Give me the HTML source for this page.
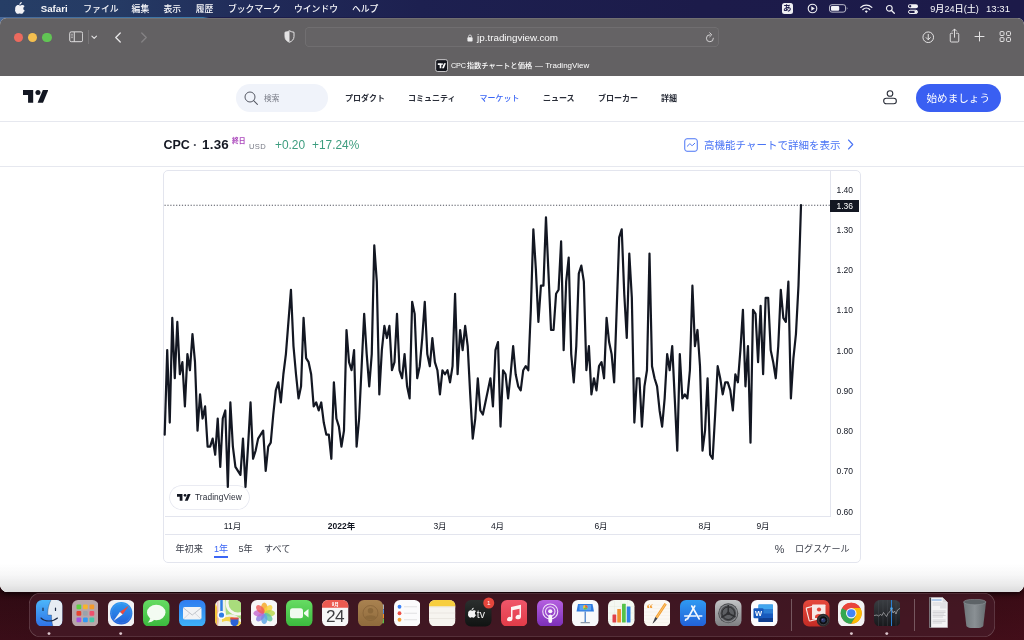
<!DOCTYPE html>
<html lang="ja">
<head>
<meta charset="utf-8">
<title>CPC指数チャートと価格 — TradingView</title>
<style>
html,body{margin:0;padding:0;}
body{width:1024px;height:640px;overflow:hidden;position:relative;background:#2a0a12;
 font-family:"Liberation Sans","Noto Sans CJK JP",sans-serif;color:#131722;}
.abs{position:absolute;white-space:nowrap;line-height:1;}
#menubar,#win,#dock{will-change:transform;}
/* desktop */
#desk{position:absolute;left:0;top:0;width:1024px;height:640px;
 background:linear-gradient(180deg,#4a6a9a 0px,#4a6a9a 40px,#2a0a12 60px,#2a0a12 100%);}
#deskdark{position:absolute;left:0;top:0;width:1024px;height:60px;
 background:linear-gradient(90deg,rgba(58,124,174,0) 0px,rgba(58,124,174,0.9) 195px,rgba(58,124,174,1) 203px,#1c1d4c 209px,#1c1b4a 1024px);}
#deskbot{position:absolute;left:0;top:585px;width:1024px;height:55px;
 background:linear-gradient(90deg,rgba(70,14,26,0.25) 0%,rgba(0,0,0,0) 25%,rgba(0,0,0,0) 70%,rgba(90,16,30,0.35) 100%),linear-gradient(180deg,#1f060b 0px,#1f060b 8px,#2b0a12 16px,#360d17 55px);}
/* menubar */
#menubar{position:absolute;left:0;top:0;width:1024px;height:17px;
 background:linear-gradient(90deg,#263e66 0px,#253a64 120px,#202a58 260px,#1d2050 420px,#1c1b4a 700px,#1c1a49 1024px);color:#fff;}
#menubar .mi{position:absolute;top:2.500px;font-size:8.800px;line-height:12px;white-space:nowrap;color:#f7f7fa;font-weight:500;}
/* safari window */
#win{position:absolute;left:0;top:18px;width:1024px;height:573.800px;border-radius:6.500px 6.500px 7.500px 7.500px;overflow:hidden;background:#fff;box-shadow:0 3px 4px -1px rgba(10,0,4,0.7);}
#toolbar{position:absolute;left:0;top:0;width:1024px;height:57.5px;background:#636163;box-shadow:inset 0 0.8px 0 rgba(255,255,255,0.13);}
#urlfield{position:absolute;left:305px;top:9.300px;width:413.500px;height:19.500px;border-radius:4.500px;background:#656365;box-shadow:inset 0 0 0 0.8px rgba(255,255,255,0.10);}
.tl{position:absolute;top:14.5px;width:9.4px;height:9.4px;border-radius:50%;}
/* page */
#page{position:absolute;left:0;top:57.5px;width:1024px;height:517px;background:#fff;}
.hline{position:absolute;left:0;width:1024px;height:1px;background:#e6e8ef;}
.nav{position:absolute;top:17px;font-size:8px;line-height:12px;font-weight:700;color:#2a2e39;white-space:nowrap;}
#chartbox{position:absolute;left:163px;top:94.500px;width:696px;height:391px;border:1px solid #e3e5ee;border-radius:5px;background:#fff;box-sizing:content-box;}
.pl{position:absolute;left:836.500px;font-size:8.500px;line-height:10px;color:#131722;white-space:nowrap;}
.tl2{position:absolute;top:445px;font-size:8.500px;line-height:10px;color:#131722;white-space:nowrap;transform:translateX(-50%);}
.rng{position:absolute;top:467.200px;font-size:9.100px;line-height:12px;color:#40444f;white-space:nowrap;}
/* dock */
#dock{position:absolute;left:29px;top:593px;width:966px;height:43.500px;border-radius:11px;background:rgba(70,28,40,0.72);box-shadow:inset 0 0 0 0.6px rgba(255,255,255,0.22);}
.ic{position:absolute;top:6.5px;width:26.5px;height:26.5px;border-radius:6px;overflow:hidden;}
.dot{position:absolute;top:39.500px;width:2.600px;height:2.600px;border-radius:50%;background:#d9c9cd;}
</style>
</head>
<body>
<div id="desk"></div><div id="deskdark"></div><div id="deskbot"></div>

<!-- MENUBAR -->
<div id="menubar">
 <svg class="abs" style="left:15.400px;top:1.700px" width="10.200" height="12" viewBox="0 0 170 200"><path fill="#f2f2f6" d="M150.4 155.6c-2.9 6.7-6.300 12.900-10.300 18.600-5.400 7.700-9.800 13.100-13.300 16-5.300 4.900-10.900 7.400-17 7.500-4.300 0-9.600-1.200-15.700-3.800-6.100-2.500-11.700-3.700-16.900-3.700-5.400 0-11.200 1.200-17.400 3.700-6.200 2.500-11.200 3.800-15 4-5.800.2-11.600-2.300-17.300-7.700-3.700-3.200-8.300-8.800-13.900-16.700-6-8.400-10.900-18.100-14.700-29.200C4.800 132.300 2.700 120.700 2.700 109.500c0-12.900 2.800-24 8.400-33.300 4.400-7.500 10.200-13.400 17.500-17.700 7.300-4.300 15.200-6.500 23.600-6.700 4.600 0 10.700 1.400 18.300 4.300 7.600 2.800 12.400 4.300 14.600 4.300 1.600 0 7-1.700 16.200-5.100 8.700-3.100 16-4.400 22-3.900 16.300 1.300 28.500 7.700 36.600 19.300-14.500 8.800-21.700 21.100-21.600 36.900.1 12.300 4.600 22.500 13.300 30.600 4 3.800 8.400 6.700 13.400 8.800-1.100 3.100-2.200 6.100-3.400 8.900zM113.100 4c0 9.700-3.500 18.700-10.600 27.100-8.500 9.900-18.800 15.700-29.900 14.800-.1-1.200-.2-2.400-.2-3.700 0-9.300 4-19.200 11.200-27.300 3.600-4.100 8.100-7.500 13.700-10.200C102.800 2 108.100.5 113 .3c.1 1.300.1 2.500.1 3.700z"/></svg>
 <span class="mi" style="left:40.700px;font-weight:700;font-size:9.700px;">Safari</span>
 <span class="mi" style="left:83.300px;">ファイル</span>
 <span class="mi" style="left:131.600px;">編集</span>
 <span class="mi" style="left:163.500px;">表示</span>
 <span class="mi" style="left:195.700px;">履歴</span>
 <span class="mi" style="left:228px;">ブックマーク</span>
 <span class="mi" style="left:294px;">ウインドウ</span>
 <span class="mi" style="left:352px;">ヘルプ</span>
 <!-- right status -->
 <div class="abs" style="left:781.5px;top:2.5px;width:11.5px;height:11.5px;border-radius:2.5px;background:#eeeef3;color:#1c1b4a;font-size:8.5px;line-height:11.5px;text-align:center;font-weight:700;">あ</div>
 <svg class="abs" style="left:806.5px;top:3px" width="11" height="11" viewBox="0 0 22 22"><circle cx="11" cy="11" r="8.6" fill="none" stroke="#f2f2f6" stroke-width="2.2"/><path d="M8.600 6.600 L15.600 11 L8.600 15.400Z" fill="#f2f2f6"/></svg>
 <svg class="abs" style="left:829px;top:4.200px" width="19.500" height="8.800" viewBox="0 0 40 20" preserveAspectRatio="none"><rect x="1" y="1.500" width="33" height="17" rx="5" fill="none" stroke="#c9c9d6" stroke-width="2"/><rect x="4" y="4.500" width="17" height="11" rx="2.500" fill="#f4f4f8"/><path d="M36.500 7 q3 3 0 6z" fill="#c9c9d6"/></svg>
 <svg class="abs" style="left:860.200px;top:3.600px" width="12.600" height="9.100" viewBox="0 0 32 23"><path d="M2 8.500 A20 20 0 0 1 30 8.500" fill="none" stroke="#f2f2f6" stroke-width="3.400" stroke-linecap="round"/><path d="M7.300 13.800 A12.500 12.500 0 0 1 24.700 13.800" fill="none" stroke="#f2f2f6" stroke-width="3.400" stroke-linecap="round"/><path d="M12.200 18.600 A5.400 5.400 0 0 1 19.800 18.600 L16 22.500Z" fill="#f2f2f6"/></svg>
 <svg class="abs" style="left:885px;top:3.500px" width="10.400" height="10.400" viewBox="0 0 24 24"><circle cx="10" cy="10" r="6.600" fill="none" stroke="#f2f2f6" stroke-width="2.600"/><path d="M15 15 L21.500 21.500" stroke="#f2f2f6" stroke-width="3" stroke-linecap="round"/></svg>
 <svg class="abs" style="left:907px;top:3px" width="12" height="12" viewBox="0 0 24 24"><rect x="2" y="2.500" width="20" height="8" rx="4" fill="#f2f2f6"/><circle cx="6.300" cy="6.500" r="2.300" fill="#1c1b4a"/><rect x="3" y="14.500" width="18" height="6.500" rx="3.250" fill="none" stroke="#f2f2f6" stroke-width="2"/><circle cx="17.500" cy="17.750" r="2.700" fill="#f2f2f6"/></svg>
 <span class="mi" style="left:930.300px;font-size:9.100px;">9月24日(土)</span>
 <span class="mi" style="left:986px;font-size:9.600px;">13:31</span>
</div>

<!-- SAFARI WINDOW -->
<div id="win">
 <div id="toolbar">
  <div class="tl" style="left:13.800px;background:#ec6a5e;"></div>
  <div class="tl" style="left:27.900px;background:#f4bf4f;"></div>
  <div class="tl" style="left:42.300px;background:#61c554;"></div>
  <!-- sidebar icon -->
  <svg class="abs" style="left:68.700px;top:13px" width="14.400" height="11.800" viewBox="0 0 30 24"><rect x="1.500" y="1.500" width="27" height="20.500" rx="3.200" fill="none" stroke="#e4e3e4" stroke-width="2"/><path d="M11 2 V22" stroke="#e4e3e4" stroke-width="2"/><path d="M4.500 6.500h3.500M4.500 10h3.500M4.500 13.500h3.500" stroke="#e4e3e4" stroke-width="1.400"/></svg>
  <div class="abs" style="left:87.500px;top:12px;width:0.6px;height:14px;background:#777577;"></div>
  <svg class="abs" style="left:91.300px;top:17.200px" width="6.400" height="4.600" viewBox="0 0 14 10"><path d="M2 2.500 L7 7.500 L12 2.500" fill="none" stroke="#e4e3e4" stroke-width="2.400" stroke-linecap="round" stroke-linejoin="round"/></svg>
  <svg class="abs" style="left:113.800px;top:13.500px" width="8" height="11" viewBox="0 0 16 22"><path d="M12.500 2 L3.500 11 L12.500 20" fill="none" stroke="#e9e8e9" stroke-width="2.600" stroke-linecap="round" stroke-linejoin="round"/></svg>
  <svg class="abs" style="left:139.500px;top:13.500px" width="8" height="11" viewBox="0 0 16 22"><path d="M3.500 2 L12.500 11 L3.500 20" fill="none" stroke="#858385" stroke-width="2.600" stroke-linecap="round" stroke-linejoin="round"/></svg>
  <!-- shield -->
  <svg class="abs" style="left:283.500px;top:12px" width="11" height="13" viewBox="0 0 22 26"><path d="M11 1.500 C8 3.500 5 4.300 2 4.500 V13 C2 19 6 22.500 11 24.500 C16 22.500 20 19 20 13 V4.500 C17 4.300 14 3.500 11 1.500Z" fill="none" stroke="#e4e3e4" stroke-width="2"/><path d="M11 1.500 C8 3.500 5 4.300 2 4.500 V13 C2 19 6 22.500 11 24.500Z" fill="#e4e3e4"/></svg>
  <div id="urlfield"></div>
  <!-- lock -->
  <svg class="abs" style="left:467px;top:15.600px" width="6" height="8" viewBox="0 0 14 18"><rect x="1" y="7.500" width="12" height="9.500" rx="1.800" fill="#ededee"/><path d="M3.700 8 V5.300 a3.300 3.300 0 0 1 6.600 0 V8" fill="none" stroke="#ededee" stroke-width="1.800"/></svg>
  <span class="abs" style="left:477px;top:13.500px;font-size:9.850px;line-height:12px;color:#fafafa;">jp.tradingview.com</span>
  <!-- reload -->
  <svg class="abs" style="left:705px;top:13.500px" width="10" height="11" viewBox="0 0 20 22"><path d="M16.800 12.500 A7 7 0 1 1 10 5.500" fill="none" stroke="#dcdbdc" stroke-width="1.800" stroke-linecap="round"/><path d="M9.500 1.500 L13.500 5.500 L9.500 9.500" fill="none" stroke="#dcdbdc" stroke-width="1.800" stroke-linecap="round" stroke-linejoin="round"/></svg>
  <!-- right icons -->
  <svg class="abs" style="left:921.800px;top:12.600px" width="12.500" height="12.500" viewBox="0 0 24 24"><circle cx="12" cy="12" r="10.200" fill="none" stroke="#e4e3e4" stroke-width="1.900"/><path d="M12 6.500 V16.500 M8 12.800 L12 16.800 L16 12.800" fill="none" stroke="#e4e3e4" stroke-width="1.900" stroke-linecap="round" stroke-linejoin="round"/></svg>
  <svg class="abs" style="left:948.500px;top:9.800px" width="11" height="15" viewBox="0 0 22 30"><path d="M7 10.500 H4.500 a2 2 0 0 0 -2 2 V26 a2 2 0 0 0 2 2 H17.500 a2 2 0 0 0 2 -2 V12.500 a2 2 0 0 0 -2 -2 H15" fill="none" stroke="#e4e3e4" stroke-width="1.900" stroke-linecap="round"/><path d="M11 18.500 V2.500 M6.800 6.300 L11 2 L15.200 6.300" fill="none" stroke="#e4e3e4" stroke-width="1.900" stroke-linecap="round" stroke-linejoin="round"/></svg>
  <svg class="abs" style="left:973.900px;top:13.100px" width="11" height="11" viewBox="0 0 22 22"><path d="M11 2 V20 M2 11 H20" stroke="#e4e3e4" stroke-width="2" stroke-linecap="round"/></svg>
  <svg class="abs" style="left:999px;top:13px" width="13" height="12" viewBox="0 0 13 12"><g fill="none" stroke="#e4e3e4" stroke-width="1"><rect x="1.100" y="0.600" width="3.900" height="3.900" rx="0.900"/><rect x="7.600" y="0.600" width="3.900" height="3.900" rx="0.900"/><rect x="1.100" y="6.600" width="3.900" height="3.900" rx="0.900"/><rect x="7.600" y="6.600" width="3.900" height="3.900" rx="0.900"/></g></svg>
  <!-- tab title -->
  <svg class="abs" style="left:434.800px;top:41.200px" width="13.200" height="13.200" viewBox="0 0 26 26"><rect x="1.300" y="1.300" width="23.400" height="23.400" rx="4" fill="#14161d" stroke="#e9e8e9" stroke-width="1.600"/><path d="M5.500 8.500 H12.500 V18 H9.200 V11.800 H5.500Z M13.800 8.500 a1.700 1.700 0 1 0 .01 0Z M17.800 8.500 H21.500 L17.500 18 H13.800Z" fill="#fff"/></svg>
  <span class="abs" style="left:451px;top:42.800px;font-size:7.300px;line-height:10px;color:#ffffff;font-weight:500;"><span style="font-size:7.300px;letter-spacing:-0.25px;">CPC</span><span style="margin-left:1px;">指数チャートと価格</span><span style="font-size:8px;margin-left:0.500px;"> — TradingView</span></span>
 </div>

 <!-- PAGE -->
 <div id="page">
  <!-- TV logo -->
  <svg class="abs" style="left:23px;top:14.800px" width="25.300" height="12.700" viewBox="0 0 36 18"><path d="M0 0 H14.500 V18 H7.200 V7.200 H0Z" fill="#131722"/><circle cx="21.300" cy="3.600" r="3.600" fill="#131722"/><path d="M28.300 0 H36 L28.500 18 H20.800Z" fill="#131722"/></svg>
  <!-- search -->
  <div class="abs" style="left:235.500px;top:8.700px;width:92px;height:28px;border-radius:14px;background:#f0f3fa;"></div>
  <svg class="abs" style="left:243.900px;top:15.800px" width="15" height="15" viewBox="0 0 30 30"><circle cx="12" cy="12" r="10" fill="none" stroke="#555863" stroke-width="2"/><path d="M19.300 19.300 L26.800 26.600" stroke="#555863" stroke-width="2.200" stroke-linecap="round"/></svg>
  <span class="abs" style="left:264px;top:18px;font-size:7.700px;line-height:10px;color:#787b86;">検索</span>
  <span class="nav" style="left:345px;">プロダクト</span>
  <span class="nav" style="left:408px;">コミュニティ</span>
  <span class="nav" style="left:479.500px;color:#3b66f5;font-weight:500;">マーケット</span>
  <span class="nav" style="left:543px;">ニュース</span>
  <span class="nav" style="left:598px;">ブローカー</span>
  <span class="nav" style="left:661px;">詳細</span>
  <!-- user -->
  <svg class="abs" style="left:881.800px;top:13.600px" width="16" height="16" viewBox="0 0 32 32"><circle cx="16" cy="9" r="5.600" fill="none" stroke="#2a2e39" stroke-width="2.200"/><rect x="3.300" y="18.600" width="25.400" height="11" rx="5.500" fill="none" stroke="#2a2e39" stroke-width="2.200"/></svg>
  <div class="abs" style="left:915.500px;top:8.700px;width:85.500px;height:28px;border-radius:14px;background:#3a5ff2;color:#fff;font-size:10.600px;line-height:28px;text-align:center;">始めましょう</div>
  <div class="hline" style="top:45.500px;"></div>

  <!-- title row -->
  <span class="abs" style="left:163.500px;top:62.500px;font-size:12.500px;line-height:14px;font-weight:700;color:#131722;">CPC</span>
  <span class="abs" style="left:193px;top:62.500px;font-size:13px;line-height:14px;font-weight:700;color:#50535e;">·</span>
  <span class="abs" style="left:202px;top:62.500px;font-size:13.400px;line-height:14px;font-weight:700;color:#131722;letter-spacing:0.25px;">1.36</span>
  <span class="abs" style="left:232px;top:61.300px;font-size:6.800px;line-height:8px;font-weight:700;color:#ab47bc;">終日</span>
  <span class="abs" style="left:249px;top:67px;font-size:7.600px;line-height:8px;color:#787b86;letter-spacing:0.3px;">USD</span>
  <span class="abs" style="left:275px;top:63.500px;font-size:11.900px;line-height:13px;color:#3d9d7f;">+0.20</span>
  <span class="abs" style="left:312px;top:63.500px;font-size:11.900px;line-height:13px;color:#3d9d7f;">+17.24%</span>
  <svg class="abs" style="left:684px;top:62px" width="14" height="14" viewBox="0 0 28 28"><rect x="1.500" y="1.500" width="25" height="25" rx="4.500" fill="none" stroke="#4a74f5" stroke-width="2"/><path d="M6.500 16.500 L10.500 12.500 C12 11 13 12 14 13.500 C15 15 16 16 17.500 14.500 L21.500 10.500" fill="none" stroke="#4a74f5" stroke-width="2" stroke-linecap="round"/></svg>
  <span class="abs" style="left:704px;top:62.500px;font-size:10.500px;line-height:14px;color:#4a74f5;">高機能チャートで詳細を表示</span>
  <svg class="abs" style="left:846.500px;top:63.500px" width="7" height="11" viewBox="0 0 14 22"><path d="M3 2 L11.500 11 L3 20" fill="none" stroke="#4a74f5" stroke-width="2.200" stroke-linecap="round" stroke-linejoin="round"/></svg>
  <div class="hline" style="top:90.500px;"></div>

  <!-- chart box -->
  <div id="chartbox"></div>
  <div class="abs" style="left:829.700px;top:95.500px;width:1px;height:345px;background:#e3e5ee;"></div>
  <div class="abs" style="left:164.500px;top:440px;width:666px;height:1px;background:#e3e5ee;"></div>
  <div class="abs" style="left:164.500px;top:458.500px;width:695.500px;height:1px;background:#e3e5ee;"></div>

  <div class="abs" style="left:169.500px;top:410.500px;width:79px;height:23px;border-radius:12px;background:#fff;box-shadow:0 0 0 0.7px #e3e5ee;"></div>
  <!-- CHART SVG (page coords: svg covers full page area) -->
  <svg id="chart" class="abs" style="left:0;top:0.500px" width="1024" height="515" viewBox="0 76 1024 515">
   <!--CHARTLINE-->
   <line x1="164.500" y1="205.250" x2="830" y2="205.250" stroke="#50535e" stroke-width="1" stroke-dasharray="1.200 1.700"/>
   <path d="M164.70 434.62 L167.22 350.10 L169.75 422.55 L172.27 317.90 L174.80 378.27 L177.32 321.93 L179.85 374.25 L182.38 362.18 L184.90 406.45 L187.42 354.12 L189.95 370.23 L192.47 334.00 L195.00 362.18 L197.52 430.60 L200.05 394.38 L202.57 418.53 L205.10 406.45 L207.62 446.70 L210.15 446.70 L212.67 438.65 L215.20 454.75 L217.72 418.53 L220.25 466.83 L222.77 418.53 L225.30 410.48 L227.82 486.95 L230.35 402.43 L232.88 446.70 L235.40 466.83 L237.92 470.85 L240.45 474.88 L242.97 438.65 L245.50 486.95 L248.02 446.70 L250.55 402.43 L253.07 458.78 L255.60 450.73 L258.12 438.65 L260.65 434.62 L263.17 430.60 L265.70 470.85 L268.22 446.70 L270.75 442.68 L273.27 414.50 L275.80 390.35 L278.32 382.30 L280.85 402.43 L283.38 374.25 L285.90 354.12 L288.42 321.93 L290.95 289.73 L293.48 346.08 L296.00 374.25 L298.52 398.40 L301.05 386.33 L303.57 317.90 L306.10 358.15 L308.62 362.18 L311.15 374.25 L313.67 406.45 L316.20 402.43 L318.73 410.48 L321.25 402.43 L323.77 422.55 L326.30 434.62 L328.82 434.62 L331.35 458.78 L333.88 382.30 L336.40 418.53 L338.92 426.58 L341.45 446.70 L343.98 430.60 L346.50 329.98 L349.02 362.18 L351.55 370.23 L354.07 350.10 L356.60 446.70 L359.12 418.53 L361.65 366.20 L364.17 313.88 L366.70 354.12 L369.23 386.33 L371.75 354.12 L374.27 245.45 L376.80 281.68 L379.32 394.38 L381.85 350.10 L384.38 325.95 L386.90 338.02 L389.42 325.95 L391.95 370.23 L394.48 362.18 L397.00 313.88 L399.52 370.23 L402.05 378.27 L404.57 354.12 L407.10 386.33 L409.62 398.40 L412.15 301.80 L414.67 313.88 L417.20 378.27 L419.72 366.20 L422.25 338.02 L424.77 301.80 L427.30 354.12 L429.82 366.20 L432.35 338.02 L434.88 362.18 L437.40 370.23 L439.92 394.38 L442.45 370.23 L444.97 374.25 L447.50 370.23 L450.02 382.30 L452.55 366.20 L455.07 293.75 L457.60 374.25 L460.12 329.98 L462.65 350.10 L465.17 325.95 L467.70 346.08 L470.22 394.38 L472.75 438.65 L475.27 418.53 L477.80 378.27 L480.32 410.48 L482.85 414.50 L485.38 402.43 L487.90 390.35 L490.42 378.27 L492.95 406.45 L495.47 350.10 L498.00 342.05 L500.52 426.58 L503.05 370.23 L505.57 374.25 L508.10 398.40 L510.62 374.25 L513.15 346.08 L515.67 374.25 L518.20 386.33 L520.72 390.35 L523.25 370.23 L525.77 366.20 L528.30 370.23 L530.83 309.85 L533.35 229.35 L535.88 269.60 L538.40 321.93 L540.92 285.70 L543.45 285.70 L545.97 217.28 L548.50 273.63 L551.02 329.98 L553.55 329.98 L556.08 293.75 L558.60 289.73 L561.12 241.43 L563.65 350.10 L566.17 281.68 L568.70 257.53 L571.22 354.12 L573.75 382.30 L576.27 346.08 L578.80 273.63 L581.33 265.58 L583.85 281.68 L586.38 370.23 L588.90 346.08 L591.42 394.38 L593.95 378.27 L596.47 390.35 L599.00 366.20 L601.52 362.18 L604.05 378.27 L606.58 317.90 L609.10 342.05 L611.62 354.12 L614.15 382.30 L616.67 309.85 L619.20 237.40 L621.72 229.35 L624.25 293.75 L626.77 338.02 L629.30 253.50 L631.83 297.78 L634.35 422.55 L636.88 378.27 L639.40 378.27 L641.92 426.58 L644.45 386.33 L646.97 370.23 L649.50 253.50 L652.02 366.20 L654.55 378.27 L657.08 386.33 L659.60 410.48 L662.12 426.58 L664.65 398.40 L667.17 354.12 L669.70 370.23 L672.22 346.08 L674.75 398.40 L677.27 450.73 L679.80 354.12 L682.33 398.40 L684.85 394.38 L687.38 398.40 L689.90 370.23 L692.42 285.70 L694.95 346.08 L697.47 329.98 L700.00 366.20 L702.52 450.73 L705.05 430.60 L707.58 378.27 L710.10 454.75 L712.62 458.78 L715.15 414.50 L717.67 366.20 L720.20 378.27 L722.72 394.38 L725.25 382.30 L727.77 382.30 L730.30 390.35 L732.83 410.48 L735.35 374.25 L737.88 382.30 L740.40 350.10 L742.92 309.85 L745.45 386.33 L747.97 346.08 L750.50 442.68 L753.02 309.85 L755.55 313.88 L758.08 362.18 L760.60 305.82 L763.12 374.25 L765.65 297.78 L768.17 297.78 L770.70 350.10 L773.22 362.18 L775.75 378.27 L778.27 346.08 L780.80 289.73 L783.33 317.90 L785.85 321.93 L788.38 281.68 L790.90 398.40 L793.42 358.15 L795.95 334.00 L798.47 285.70 L801.00 205.20" fill="none" stroke="#131722" stroke-width="2.2" stroke-linejoin="round" stroke-linecap="round"/>
   <!--/CHARTLINE-->
  </svg>

  <!-- price labels -->
  <span class="pl" style="top:109px;">1.40</span>
  <div class="abs" style="left:829.800px;top:124px;width:29.400px;height:12.500px;background:#131722;"></div>
  <span class="pl" style="top:125.500px;color:#fff;">1.36</span>
  <span class="pl" style="top:149.300px;">1.30</span>
  <span class="pl" style="top:189.500px;">1.20</span>
  <span class="pl" style="top:229.800px;">1.10</span>
  <span class="pl" style="top:270px;">1.00</span>
  <span class="pl" style="top:310.300px;">0.90</span>
  <span class="pl" style="top:350.500px;">0.80</span>
  <span class="pl" style="top:390.800px;">0.70</span>
  <span class="pl" style="top:431px;">0.60</span>
  <!-- time labels -->
  <span class="tl2" style="left:232.500px;">11月</span>
  <span class="tl2" style="left:341.500px;font-weight:700;">2022年</span>
  <span class="tl2" style="left:440px;">3月</span>
  <span class="tl2" style="left:497.500px;">4月</span>
  <span class="tl2" style="left:601px;">6月</span>
  <span class="tl2" style="left:705px;">8月</span>
  <span class="tl2" style="left:763px;">9月</span>
  <!-- watermark -->
  
  <svg class="abs" style="left:177px;top:418.300px" width="13.600" height="6.800" viewBox="0 0 36 18"><path d="M0 0 H14.500 V18 H7.200 V7.200 H0Z" fill="#131722"/><circle cx="21.300" cy="3.600" r="3.600" fill="#131722"/><path d="M28.300 0 H36 L28.500 18 H20.800Z" fill="#131722"/></svg>
  <span class="abs" style="left:195px;top:417.500px;font-size:8.300px;line-height:9px;color:#2a2e39;letter-spacing:0.1px;">TradingView</span>
  <!-- range row -->
  <span class="rng" style="left:175.500px;">年初来</span>
  <span class="rng" style="left:214px;color:#3b66f5;">1年</span>
  <div class="abs" style="left:214px;top:480.500px;width:14px;height:1.600px;background:#3b66f5;"></div>
  <span class="rng" style="left:238.500px;">5年</span>
  <span class="rng" style="left:264px;">すべて</span>
  <span class="rng" style="left:774.800px;font-size:10.800px;">%</span>
  <span class="rng" style="left:795px;">ログスケール</span>
  <!-- bottom fade -->
  <div class="abs" style="left:0;top:488.500px;width:1024px;height:28px;background:linear-gradient(180deg,rgba(222,222,223,0) 0%,rgba(222,222,223,0.25) 40%,rgba(222,222,223,0.65) 75%,rgba(218,218,219,1) 100%);"></div>
 </div>
</div>

<!-- DOCK -->
<div id="dock">
 <!--DOCKICONS--><svg width="0" height="0" style="position:absolute"><defs>
<linearGradient id="gFinderL" x1="0" y1="0" x2="0" y2="1"><stop offset="0" stop-color="#4cb6fa"/><stop offset="1" stop-color="#2f72e6"/></linearGradient>
<linearGradient id="gGreen" x1="0" y1="0" x2="0" y2="1"><stop offset="0" stop-color="#66dc63"/><stop offset="1" stop-color="#3bb93d"/></linearGradient>
<linearGradient id="gMail" x1="0" y1="0" x2="0" y2="1"><stop offset="0" stop-color="#2f7cf0"/><stop offset="1" stop-color="#3fb2f8"/></linearGradient>
<linearGradient id="gMusic" x1="0" y1="0" x2="0" y2="1"><stop offset="0" stop-color="#f0566a"/><stop offset="1" stop-color="#e23b48"/></linearGradient>
<linearGradient id="gPod" x1="0" y1="0" x2="0" y2="1"><stop offset="0" stop-color="#b55fe0"/><stop offset="1" stop-color="#7c2fb8"/></linearGradient>
<linearGradient id="gStore" x1="0" y1="0" x2="0" y2="1"><stop offset="0" stop-color="#2f9af2"/><stop offset="1" stop-color="#2260d8"/></linearGradient>
<linearGradient id="gPrefs" x1="0" y1="0" x2="0" y2="1"><stop offset="0" stop-color="#c3c4c6"/><stop offset="1" stop-color="#7d7e81"/></linearGradient>
<linearGradient id="gTV" x1="0" y1="0" x2="0" y2="1"><stop offset="0" stop-color="#2b2f2e"/><stop offset="1" stop-color="#101312"/></linearGradient>
<linearGradient id="gStocks" x1="0" y1="0" x2="0" y2="1"><stop offset="0" stop-color="#3a3d42"/><stop offset="1" stop-color="#17181b"/></linearGradient>
<linearGradient id="gPB" x1="0" y1="0" x2="0" y2="1"><stop offset="0" stop-color="#e5483c"/><stop offset="1" stop-color="#c32c25"/></linearGradient>
<linearGradient id="gTrash" x1="0" y1="0" x2="1" y2="0"><stop offset="0" stop-color="#6f767a"/><stop offset="0.5" stop-color="#8a9094"/><stop offset="1" stop-color="#666c70"/></linearGradient>
<linearGradient id="gContacts" x1="0" y1="0" x2="0" y2="1"><stop offset="0" stop-color="#a98250"/><stop offset="1" stop-color="#8f6a3c"/></linearGradient>
<clipPath id="cpIcon"><rect x="0" y="0" width="53" height="53" rx="12" ry="12"/></clipPath>
</defs></svg><svg class="abs" style="left:7.00px;top:6.600px;" width="26.5" height="26.5" viewBox="0 0 53 53"><g clip-path="url(#cpIcon)"><rect width="53" height="53" fill="url(#gFinderL)"/><path d="M30 0 C25 10 23 20 23.500 30 H31 C31 38 32 46 34 53 H53 V0Z" fill="#e6ecf3"/><path d="M14 16 v5 M39 16 v5" stroke="#1d2a44" stroke-width="2.400" stroke-linecap="round"/><path d="M10 36 C18 44 34 44 43 36" fill="none" stroke="#1d2a44" stroke-width="2.200" stroke-linecap="round"/><path d="M30 0 C25 10 23 20 23.500 30 H31 C31 38 32 46 34 53" fill="none" stroke="#1d2a44" stroke-width="1.200" opacity="0.55"/></g></svg><svg class="abs" style="left:42.75px;top:6.600px;" width="26.5" height="26.5" viewBox="0 0 53 53"><rect width="53" height="53" rx="12" ry="12" fill="#b8a6a9"/><rect x="9" y="9" width="9.500" height="9.500" rx="2.200" fill="#5ed23f"/><rect x="22" y="9" width="9.500" height="9.500" rx="2.200" fill="#f6b42c"/><rect x="35" y="9" width="9.500" height="9.500" rx="2.200" fill="#f59a2c"/><rect x="9" y="22" width="9.500" height="9.500" rx="2.200" fill="#e8432f"/><rect x="22" y="22" width="9.500" height="9.500" rx="2.200" fill="#9aa3ab"/><rect x="35" y="22" width="9.500" height="9.500" rx="2.200" fill="#f0506e"/><rect x="9" y="35" width="9.500" height="9.500" rx="2.200" fill="#a652e0"/><rect x="22" y="35" width="9.500" height="9.500" rx="2.200" fill="#2f9af5"/><rect x="35" y="35" width="9.500" height="9.500" rx="2.200" fill="#45c9a8"/></svg><svg class="abs" style="left:78.50px;top:6.600px;" width="26.5" height="26.5" viewBox="0 0 53 53"><rect width="53" height="53" rx="12" ry="12" fill="#f1f1f3"/><circle cx="26.500" cy="26.500" r="22.300" fill="url(#gStore)"/><circle cx="26.500" cy="26.500" r="19.500" fill="none" stroke="#9cc6f5" stroke-width="1" stroke-dasharray="0.800 1.700"/><path d="M42 11 L29.200 29.200 L23.800 23.800Z" fill="#ec4a3c"/><path d="M11 42 L29.200 29.200 L23.800 23.800Z" fill="#f4f4f6"/></svg><svg class="abs" style="left:114.25px;top:6.600px;" width="26.5" height="26.5" viewBox="0 0 53 53"><rect width="53" height="53" rx="12" ry="12" fill="url(#gGreen)"/><ellipse cx="26.500" cy="25" rx="18.500" ry="15.500" fill="#f3fbf2"/><path d="M14 36 C14 41 12 43 9 45 C15 45 20 43 23 39Z" fill="#f3fbf2"/></svg><svg class="abs" style="left:150.00px;top:6.600px;" width="26.5" height="26.5" viewBox="0 0 53 53"><rect width="53" height="53" rx="12" ry="12" fill="url(#gMail)"/><rect x="8" y="14" width="37" height="25" rx="3.500" fill="#f2f3f5"/><path d="M9 16 L26.500 30 L44 16" fill="none" stroke="#b9bdc4" stroke-width="1.800" stroke-linejoin="round"/><path d="M9.500 37.500 L21 26.500 M43.500 37.500 L32 26.500" stroke="#c9ccd2" stroke-width="1.400"/></svg><svg class="abs" style="left:185.75px;top:6.600px;" width="26.5" height="26.5" viewBox="0 0 53 53"><g clip-path="url(#cpIcon)"><rect width="53" height="53" fill="#eef0e6"/><path d="M20 0 H53 V40 C44 30 32 26 22 30Z" fill="#a9dc7c"/><circle cx="46" cy="6" r="22" fill="none" stroke="#f6f6f0" stroke-width="6"/><path d="M0 6 C6 14 8 30 6 53 H0Z" fill="#f4c63a"/><path d="M14 38 C26 30 40 32 53 46 V53 H40 C34 42 24 40 14 44Z" fill="#f5d34a"/><path d="M6 0 C4 20 8 36 4 53" fill="none" stroke="#f0b8c0" stroke-width="2.500"/><rect x="10.500" y="0" width="5" height="26" fill="#2f7de6"/><circle cx="13" cy="30" r="8" fill="#fdfdfd"/><circle cx="13" cy="30" r="5.200" fill="#2f7de6"/><path d="M31 36 h16 v8 c0 5 -4 8 -8 9 c-4 -1 -8 -4 -8 -9z" fill="#2a62d8"/><rect x="31" y="35" width="16" height="4" fill="#e04a40"/></g></svg><svg class="abs" style="left:221.50px;top:6.600px;" width="26.5" height="26.5" viewBox="0 0 53 53"><rect width="53" height="53" rx="12" ry="12" fill="#f7f7f8"/><ellipse cx="26.500" cy="15.500" rx="6.300" ry="10.500" fill="#f5a623" opacity="0.820" transform="rotate(0 26.500 26.500)"/><ellipse cx="26.500" cy="15.500" rx="6.300" ry="10.500" fill="#f8d33a" opacity="0.820" transform="rotate(45 26.500 26.500)"/><ellipse cx="26.500" cy="15.500" rx="6.300" ry="10.500" fill="#b7d84a" opacity="0.820" transform="rotate(90 26.500 26.500)"/><ellipse cx="26.500" cy="15.500" rx="6.300" ry="10.500" fill="#5ec6a0" opacity="0.820" transform="rotate(135 26.500 26.500)"/><ellipse cx="26.500" cy="15.500" rx="6.300" ry="10.500" fill="#5aa6e8" opacity="0.820" transform="rotate(180 26.500 26.500)"/><ellipse cx="26.500" cy="15.500" rx="6.300" ry="10.500" fill="#8a7de0" opacity="0.820" transform="rotate(225 26.500 26.500)"/><ellipse cx="26.500" cy="15.500" rx="6.300" ry="10.500" fill="#c66ad0" opacity="0.820" transform="rotate(270 26.500 26.500)"/><ellipse cx="26.500" cy="15.500" rx="6.300" ry="10.500" fill="#ef5b5b" opacity="0.820" transform="rotate(315 26.500 26.500)"/></svg><svg class="abs" style="left:257.25px;top:6.600px;" width="26.5" height="26.5" viewBox="0 0 53 53"><rect width="53" height="53" rx="12" ry="12" fill="url(#gGreen)"/><rect x="8" y="16.500" width="26" height="20" rx="5" fill="#f1faf0"/><path d="M36 25 L45 18 V35 L36 28Z" fill="#f1faf0"/></svg><svg class="abs" style="left:293.00px;top:6.600px;" width="26.5" height="26.5" viewBox="0 0 53 53"><g clip-path="url(#cpIcon)"><rect width="53" height="53" fill="#f7f7f7"/><rect width="53" height="15.500" fill="#ec5a50"/></g><text x="26.500" y="12" font-size="9" font-weight="700" fill="#ffffff" text-anchor="middle" font-family="Liberation Sans,Noto Sans CJK JP,sans-serif">9月</text><text x="26" y="44.500" font-size="34.500" fill="#3f3f42" text-anchor="middle" font-family="Liberation Sans,sans-serif" letter-spacing="-1.200">24</text></svg><svg class="abs" style="left:328.75px;top:6.600px;" width="26.5" height="26.5" viewBox="0 0 53 53"><rect x="44" y="9" width="9.500" height="9" rx="2" fill="#a9b0b8"/><rect x="44" y="18.500" width="9.500" height="9" fill="#4a90e2"/><rect x="44" y="28" width="9.500" height="9" fill="#f0922e"/><rect x="44" y="37.500" width="9.500" height="9" rx="2" fill="#5cc04a"/><rect width="50" height="53" rx="12" ry="12" fill="url(#gContacts)"/><circle cx="25" cy="26" r="15" fill="none" stroke="#7e5c33" stroke-width="1.500" opacity="0.800"/><circle cx="25" cy="21.500" r="5.500" fill="#8b683b"/><path d="M13.500 35 C16 29 34 29 36.500 35 C33 40.500 17 40.500 13.500 35Z" fill="#8b683b"/></svg><svg class="abs" style="left:364.50px;top:6.600px;" width="26.5" height="26.5" viewBox="0 0 53 53"><rect width="53" height="53" rx="12" ry="12" fill="#fbfbfc"/><circle cx="11" cy="13.500" r="3.800" fill="#3b82f6"/><circle cx="11" cy="26.500" r="3.800" fill="#ef4f46"/><circle cx="11" cy="39.500" r="3.800" fill="#f2a33a"/><path d="M20 13.500 H46 M20 26.500 H46 M20 39.500 H46" stroke="#d2d2d6" stroke-width="1.300"/></svg><svg class="abs" style="left:400.25px;top:6.600px;" width="26.5" height="26.5" viewBox="0 0 53 53"><g clip-path="url(#cpIcon)"><rect width="53" height="53" fill="#f6f4ef"/><rect width="53" height="13" fill="#f7ce3e"/><rect y="13" width="53" height="2" fill="#e9e6df"/><path d="M0 26 H53 M0 37 H53" stroke="#dedbd3" stroke-width="1"/></g></svg><svg class="abs" style="left:436.00px;top:6.600px;overflow:visible;" width="26.5" height="26.5" viewBox="0 0 53 53"><rect width="53" height="53" rx="12" ry="12" fill="url(#gTV)"/><path transform="translate(6 15.500) scale(0.100)" fill="#f5f5f5" d="M150.400 155.600c-2.900 6.700-6.300 12.900-10.300 18.600-5.400 7.700-9.800 13.100-13.300 16-5.300 4.900-10.900 7.400-17 7.500-4.300 0-9.600-1.200-15.700-3.800-6.100-2.500-11.700-3.700-16.900-3.700-5.400 0-11.200 1.200-17.400 3.700-6.200 2.500-11.200 3.800-15 4-5.800.2-11.600-2.300-17.300-7.700-3.700-3.200-8.300-8.800-13.900-16.700-6-8.400-10.900-18.100-14.700-29.200C4.800 132.300 2.700 120.700 2.700 109.500c0-12.900 2.800-24 8.400-33.300 4.400-7.500 10.200-13.400 17.500-17.700 7.300-4.300 15.200-6.500 23.600-6.700 4.600 0 10.700 1.400 18.300 4.300 7.600 2.800 12.400 4.300 14.600 4.300 1.600 0 7-1.700 16.200-5.100 8.700-3.100 16-4.400 22-3.900 16.300 1.300 28.500 7.700 36.600 19.300-14.500 8.800-21.700 21.100-21.600 36.900.1 12.300 4.600 22.500 13.300 30.600 4 3.800 8.400 6.700 13.400 8.800-1.100 3.100-2.200 6.100-3.400 8.900zM113.100 4c0 9.700-3.500 18.700-10.600 27.100-8.500 9.900-18.800 15.700-29.900 14.800-.1-1.200-.2-2.400-.2-3.700 0-9.300 4-19.200 11.200-27.300 3.600-4.100 8.100-7.500 13.700-10.200C102.800 2 108.100.500 113 .300c.1 1.300.1 2.500.1 3.700z"/><text x="23.500" y="35.500" font-size="21" fill="#f5f5f5" font-family="Liberation Sans,sans-serif">tv</text><circle cx="47.500" cy="6" r="11" fill="#e5463c"/><text x="47.500" y="10.500" font-size="12.500" fill="#fff" text-anchor="middle" font-family="Liberation Sans,sans-serif">1</text></svg><svg class="abs" style="left:471.75px;top:6.600px;" width="26.5" height="26.5" viewBox="0 0 53 53"><rect width="53" height="53" rx="12" ry="12" fill="url(#gMusic)"/><path d="M20 14 L40 9.500 V34 a5.500 4.500 -15 1 1 -3 -4.200 V17.500 L23 20.500 V38 a5.500 4.500 -15 1 1 -3 -4.200Z" fill="#fdf3f3"/></svg><svg class="abs" style="left:507.50px;top:6.600px;" width="26.5" height="26.5" viewBox="0 0 53 53"><rect width="53" height="53" rx="12" ry="12" fill="url(#gPod)"/><circle cx="26.500" cy="23" r="15" fill="none" stroke="#f0e2f8" stroke-width="2.200"/><circle cx="26.500" cy="23" r="9.500" fill="none" stroke="#f0e2f8" stroke-width="2.200"/><circle cx="26.500" cy="22.500" r="4.200" fill="#fbf6fd"/><rect x="22.700" y="29" width="7.600" height="17" rx="3.800" fill="#fbf6fd"/><rect x="18" y="36" width="17" height="14" fill="url(#gPod)" opacity="0"/></svg><svg class="abs" style="left:543.25px;top:6.600px;" width="26.5" height="26.5" viewBox="0 0 53 53"><rect width="53" height="53" rx="12" ry="12" fill="#f8f9fb"/><path d="M12 8 H41 L44 23 H9Z" fill="#2f7ae0"/><rect x="15" y="10" width="23" height="10.500" fill="#5aa2f2"/><circle cx="26.500" cy="14.500" r="4.500" fill="#f2c43a"/><path d="M26.500 14.500 L26.500 10 A4.500 4.500 0 0 1 30.800 16Z" fill="#e5554a"/><path d="M26.500 14.500 L30.800 16 A4.500 4.500 0 0 1 23 17.500Z" fill="#5cbf5a"/><rect x="25" y="23" width="3" height="21" fill="#5f8fd0"/><rect x="17" y="44" width="19" height="2.600" rx="1.300" fill="#8d98a8"/></svg><svg class="abs" style="left:579.00px;top:6.600px;" width="26.5" height="26.5" viewBox="0 0 53 53"><rect width="53" height="53" rx="12" ry="12" fill="#f4f8f1"/><path d="M0 13 H53 M0 26 H53 M0 39 H53 M13 0 V53 M26 0 V53 M39 0 V53" stroke="#dfe8da" stroke-width="0.700"/><rect x="9" y="29" width="7.500" height="16" rx="1" fill="#e0434a"/><rect x="18.500" y="18" width="7.500" height="27" rx="1" fill="#f0922e"/><rect x="28" y="7.500" width="7.500" height="37.500" rx="1" fill="#55c24a"/><rect x="37.500" y="13" width="7.500" height="32" rx="1" fill="#2f80e6"/></svg><svg class="abs" style="left:614.75px;top:6.600px;" width="26.5" height="26.5" viewBox="0 0 53 53"><rect width="53" height="53" rx="12" ry="12" fill="#fbf8f3"/><path d="M0 10 H53 M0 17 H53 M0 24 H53 M0 31 H53 M0 38 H53 M0 45 H53" stroke="#f1ebe0" stroke-width="0.700"/><text x="5" y="26" font-size="26" font-weight="700" fill="#f39a2b" font-family="Liberation Serif,serif">“</text><path d="M41 6 L45.500 9 L27 37 L22.500 34Z" fill="#f39a2b"/><path d="M42.500 7 L44 8 L25.500 36 L24 35Z" fill="#f8c774"/><path d="M22.500 34 L27 37 L22 43 L19.500 41.500Z" fill="#3c3f45"/><path d="M19.500 41.500 L22 43 L17 47.500Z" fill="#1f2125"/></svg><svg class="abs" style="left:650.50px;top:6.600px;" width="26.5" height="26.5" viewBox="0 0 53 53"><rect width="53" height="53" rx="12" ry="12" fill="url(#gStore)"/><g stroke="#f4f8fe" stroke-width="3.300" stroke-linecap="round" fill="none"><path d="M29.500 12 L15 38"/><path d="M23.500 12 L38.500 38"/><path d="M9.500 32 H32 M38 32 H43.500"/><path d="M12.500 38 L11 40.500"/></g></svg><svg class="abs" style="left:686.25px;top:6.600px;" width="26.5" height="26.5" viewBox="0 0 53 53"><rect width="53" height="53" rx="12" ry="12" fill="url(#gPrefs)"/><circle cx="26.500" cy="26.500" r="20" fill="#4a4b4e"/><circle cx="26.500" cy="26.500" r="17" fill="none" stroke="#85878b" stroke-width="2.500"/><circle cx="26.500" cy="26.500" r="12.500" fill="#5d5f63" stroke="#2f3033" stroke-width="2"/><g stroke="#2f3033" stroke-width="3"><path d="M26.500 26.500 L26.500 10"/><path d="M26.500 26.500 L41 34"/><path d="M26.500 26.500 L12.500 35"/></g><circle cx="26.500" cy="26.500" r="3.500" fill="#2f3033"/></svg><svg class="abs" style="left:722.00px;top:6.600px;" width="26.5" height="26.5" viewBox="0 0 53 53"><rect width="53" height="53" rx="12" ry="12" fill="#fbfbfd"/><rect x="15" y="9" width="29" height="35" rx="2.500" fill="#2b7cd3"/><rect x="15" y="9" width="29" height="9" fill="#41a5ee"/><rect x="15" y="18" width="29" height="9" fill="#2b7cd3"/><rect x="15" y="27" width="29" height="9" fill="#185abd"/><rect x="15" y="36" width="29" height="8" fill="#103f91"/><rect x="5" y="16.500" width="20" height="20" rx="2" fill="#185abd"/><text x="15" y="32" font-size="15" font-weight="700" fill="#fff" text-anchor="middle" font-family="Liberation Sans,sans-serif">W</text></svg><svg class="abs" style="left:773.80px;top:6.600px;overflow:visible;" width="26.5" height="26.5" viewBox="0 0 53 53"><rect width="53" height="53" rx="12" ry="12" fill="url(#gPB)"/><rect x="9" y="13" width="22" height="27" rx="1.500" fill="none" stroke="#f7e9e7" stroke-width="2.200" transform="rotate(-14 20 26)"/><rect x="18" y="9" width="27" height="30" rx="1.500" fill="#f7e9e7"/><circle cx="32" cy="19" r="4.200" fill="#e5483c"/><path d="M24 33 C24 26 40 26 40 33 V36 H24Z" fill="#e5483c"/><circle cx="40.500" cy="40.500" r="13" fill="#2a2b2e"/><circle cx="40.500" cy="40.500" r="9" fill="#0e0f12" stroke="#4a4c52" stroke-width="1.500"/><circle cx="40.500" cy="40.500" r="4.500" fill="#2b3a66"/><circle cx="39" cy="39" r="1.500" fill="#7a5fb5"/></svg><svg class="abs" style="left:809.40px;top:6.600px;" width="26.5" height="26.5" viewBox="0 0 53 53"><rect width="53" height="53" rx="12" ry="12" fill="#f3f3f4"/><circle cx="26.500" cy="26.500" r="21" fill="#e8453c"/><path d="M26.500 26.500 L8.300 16 A21 21 0 0 0 26.500 47.500 L36 32Z" fill="#34a853"/><path d="M26.500 26.500 L36 32 L26.500 47.500 A21 21 0 0 0 44.700 16 H26.500Z" fill="#fbbc05"/><path d="M8.300 16 A21 21 0 0 1 44.700 16 H26.500 L17 21Z" fill="#e8453c"/><circle cx="26.500" cy="26.500" r="10.500" fill="#f5f5f5"/><circle cx="26.500" cy="26.500" r="8.200" fill="#4285f4"/></svg><svg class="abs" style="left:844.60px;top:6.600px;" width="26.5" height="26.5" viewBox="0 0 53 53"><g clip-path="url(#cpIcon)"><rect width="53" height="53" fill="url(#gStocks)"/><path d="M9 0 V53 M18 0 V53 M27 0 V53 M44 0 V53" stroke="#4a4d53" stroke-width="0.800"/><path d="M35 0 V53" stroke="#2b7fd2" stroke-width="2"/><path d="M0 31 L6 30 L9 32 L13 29 L16 31 L19 25 L22 29 L25 33 L28 27 L31 24 L33 21 L35 17 L38 26 L41 22 L44 28 L47 20 L53 16" fill="none" stroke="#d6d6d9" stroke-width="1.100" stroke-linejoin="round"/><circle cx="35" cy="17" r="2.400" fill="#46a8f5"/></g></svg><div class="abs" style="left:761.80px;top:5.500px;width:0.700px;height:32px;background:rgba(255,255,255,0.28);"></div><div class="abs" style="left:884.70px;top:5.500px;width:0.700px;height:32px;background:rgba(255,255,255,0.28);"></div><svg class="abs" style="left:900.30px;top:4px" width="19.200" height="31" viewBox="0 0 38 62"><path d="M1 1 H27 L37 11 V61 H1Z" fill="#f4f4f5" stroke="#c9c9cc" stroke-width="1"/><rect x="1" y="1" width="3" height="60" fill="#3a3b40"/><path d="M27 1 V11 H37Z" fill="#d9d9dc"/><rect x="5" y="5" width="20" height="2" fill="#6aa0e0"/><g stroke="#b4b4b8" stroke-width="1"><path d="M7 12 H24 M7 16 H22 M7 28 H33 M7 31 H33 M7 34 H30 M7 37 H33 M7 40 H28 M7 46 H33 M7 49 H33 M7 52 H26"/></g><rect x="22" y="11" width="13" height="12" fill="#e2e2e5"/></svg><svg class="abs" style="left:934.20px;top:5.500px" width="23.600" height="29.500" viewBox="0 0 47 59"><path d="M1 6 L6.500 53 C7 57 14 58.500 23.500 58.500 C33 58.500 40 57 40.500 53 L46 6Z" fill="url(#gTrash)"/><ellipse cx="23.500" cy="6" rx="22.500" ry="5.500" fill="#5d6367" stroke="#8e9498" stroke-width="1.200"/></svg><svg class="abs" style="left:0;top:36px" width="966" height="7" viewBox="0 0 966 7"><circle cx="20.00" cy="4.600" r="1.450" fill="#dcc6cd"/><circle cx="91.70" cy="4.600" r="1.450" fill="#dcc6cd"/><circle cx="822.40" cy="4.600" r="1.450" fill="#dcc6cd"/><circle cx="857.80" cy="4.600" r="1.450" fill="#dcc6cd"/></svg><!--/DOCKICONS-->
</div>
</body>
</html>
